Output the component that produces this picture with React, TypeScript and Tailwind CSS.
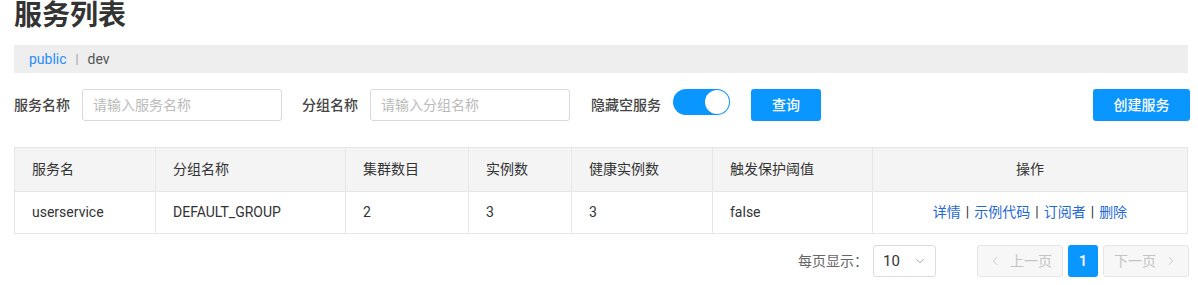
import { ChevronDown, ChevronLeft, ChevronRight } from 'lucide-react';

const font = { fontFamily: 'Roboto, "Noto Sans CJK SC", sans-serif' };

const columns = [
    { title: '服务名', width: 'w-[141px]' },
    { title: '分组名称', width: 'w-[190px]' },
    { title: '集群数目', width: 'w-[123px]' },
    { title: '实例数', width: 'w-[103px]' },
    { title: '健康实例数', width: 'w-[141px]' },
    { title: '触发保护阈值', width: 'w-[160px]' },
];

const rows = [
    { name: 'userservice', group: 'DEFAULT_GROUP', clusters: '2', instances: '3', healthy: '3', threshold: 'false' },
];

export default function App() {
    return (
        <div className="w-[1198px] h-[285px] bg-white pl-[14px] pr-[8px] text-[#333]" style={font}>
            {/* Title */}
            <h1 className="h-[32px] text-[28px] leading-[32px] font-semibold text-[#333]">服务列表</h1>

            {/* Namespace bar */}
            <div className="mt-[13px] mr-[2px] h-[28px] bg-[#eeeeee] flex items-center pl-[15px] text-[14px]">
                <span className="text-[#2a8cff]">public</span>
                <span className="mx-[9px] text-[#999] text-[12px]">|</span>
                <span className="text-[#555]">dev</span>
            </div>

            {/* Filters */}
            <div className="mt-[16px] h-[32px] flex items-center text-[14px]">
                <label className="font-medium text-[#444] mr-[12px]">服务名称</label>
                <input
                    type="text"
                    placeholder="请输入服务名称"
                    className="w-[200px] h-[32px] border border-[#d9d9d9] rounded-[3px] px-[10px] text-[14px] placeholder:text-[#bbb] outline-none"
                />
                <label className="ml-[20px] font-medium text-[#444] mr-[12px]">分组名称</label>
                <input
                    type="text"
                    placeholder="请输入分组名称"
                    className="w-[200px] h-[32px] border border-[#d9d9d9] rounded-[3px] px-[10px] text-[14px] placeholder:text-[#bbb] outline-none"
                />
                <label className="ml-[21px] font-medium text-[#444] mr-[12px]">隐藏空服务</label>
                <button type="button" className="self-start w-[57px] h-[26px] rounded-full bg-[#0a96ff] p-[1px] flex justify-end">
                    <span className="w-[24px] h-[24px] rounded-full bg-white block" />
                </button>
                <button type="button" className="ml-[21px] w-[70px] h-[32px] rounded-[3px] bg-[#0a96ff] text-white font-medium">
                    查询
                </button>
                <div className="flex-1" />
                <button type="button" className="w-[97px] h-[32px] rounded-[3px] bg-[#0a96ff] text-white font-medium">
                    创建服务
                </button>
            </div>

            {/* Table */}
            <table className="mt-[26px] w-[1174px] table-fixed border-collapse text-[14px]">
                <thead>
                    <tr className="h-[44px] bg-[#f4f4f4]">
                        {columns.map((c) => (
                            <th key={c.title} className={`${c.width} border border-[#e6e6e6] pl-[17px] text-left font-normal text-[#333]`}>
                                {c.title}
                            </th>
                        ))}
                        <th className="border border-[#e6e6e6] text-center font-normal text-[#333]">操作</th>
                    </tr>
                </thead>
                <tbody>
                    {rows.map((r) => (
                        <tr key={r.name} className="h-[42px]">
                            <td className="border border-[#e6e6e6] pl-[17px]">{r.name}</td>
                            <td className="border border-[#e6e6e6] pl-[17px]">{r.group}</td>
                            <td className="border border-[#e6e6e6] pl-[17px]">{r.clusters}</td>
                            <td className="border border-[#e6e6e6] pl-[17px]">{r.instances}</td>
                            <td className="border border-[#e6e6e6] pl-[17px]">{r.healthy}</td>
                            <td className="border border-[#e6e6e6] pl-[17px]">{r.threshold}</td>
                            <td className="border border-[#e6e6e6] text-center text-[#1f6ad6]">
                                <a>详情</a>
                                <span className="mx-[5px] text-[#333]">|</span>
                                <a>示例代码</a>
                                <span className="mx-[5px] text-[#333]">|</span>
                                <a>订阅者</a>
                                <span className="mx-[5px] text-[#333]">|</span>
                                <a>删除</a>
                            </td>
                        </tr>
                    ))}
                </tbody>
            </table>

            {/* Pagination */}
            <div className="mt-[11px] h-[32px] flex items-center justify-end pr-[1px] text-[14px]">
                <span className="text-[#666] mr-[5px]">每页显示：</span>
                <div className="w-[63px] h-[32px] border border-[#dcdcdc] rounded-[3px] flex items-center pl-[9px] pr-[8px] justify-between">
                    <span className="text-[#333] text-[15px]">10</span>
                    <ChevronDown className="w-[14px] h-[14px] text-[#999]" strokeWidth={1.5} />
                </div>
                <button type="button" disabled className="ml-[41px] w-[86px] h-[32px] border border-[#e6e6e6] bg-[#f7f7f7] rounded-[3px] flex items-center justify-center gap-[8px] text-[#c4c4c4]">
                    <ChevronLeft className="w-[14px] h-[14px]" strokeWidth={1.5} />
                    上一页
                </button>
                <button type="button" className="ml-[5px] w-[30px] h-[32px] rounded-[3px] bg-[#0a96ff] text-white font-semibold">
                    1
                </button>
                <button type="button" disabled className="ml-[5px] w-[86px] h-[32px] border border-[#e6e6e6] bg-[#f7f7f7] rounded-[3px] flex items-center justify-center gap-[8px] text-[#c4c4c4]">
                    下一页
                    <ChevronRight className="w-[14px] h-[14px]" strokeWidth={1.5} />
                </button>
            </div>
        </div>
    );
}
